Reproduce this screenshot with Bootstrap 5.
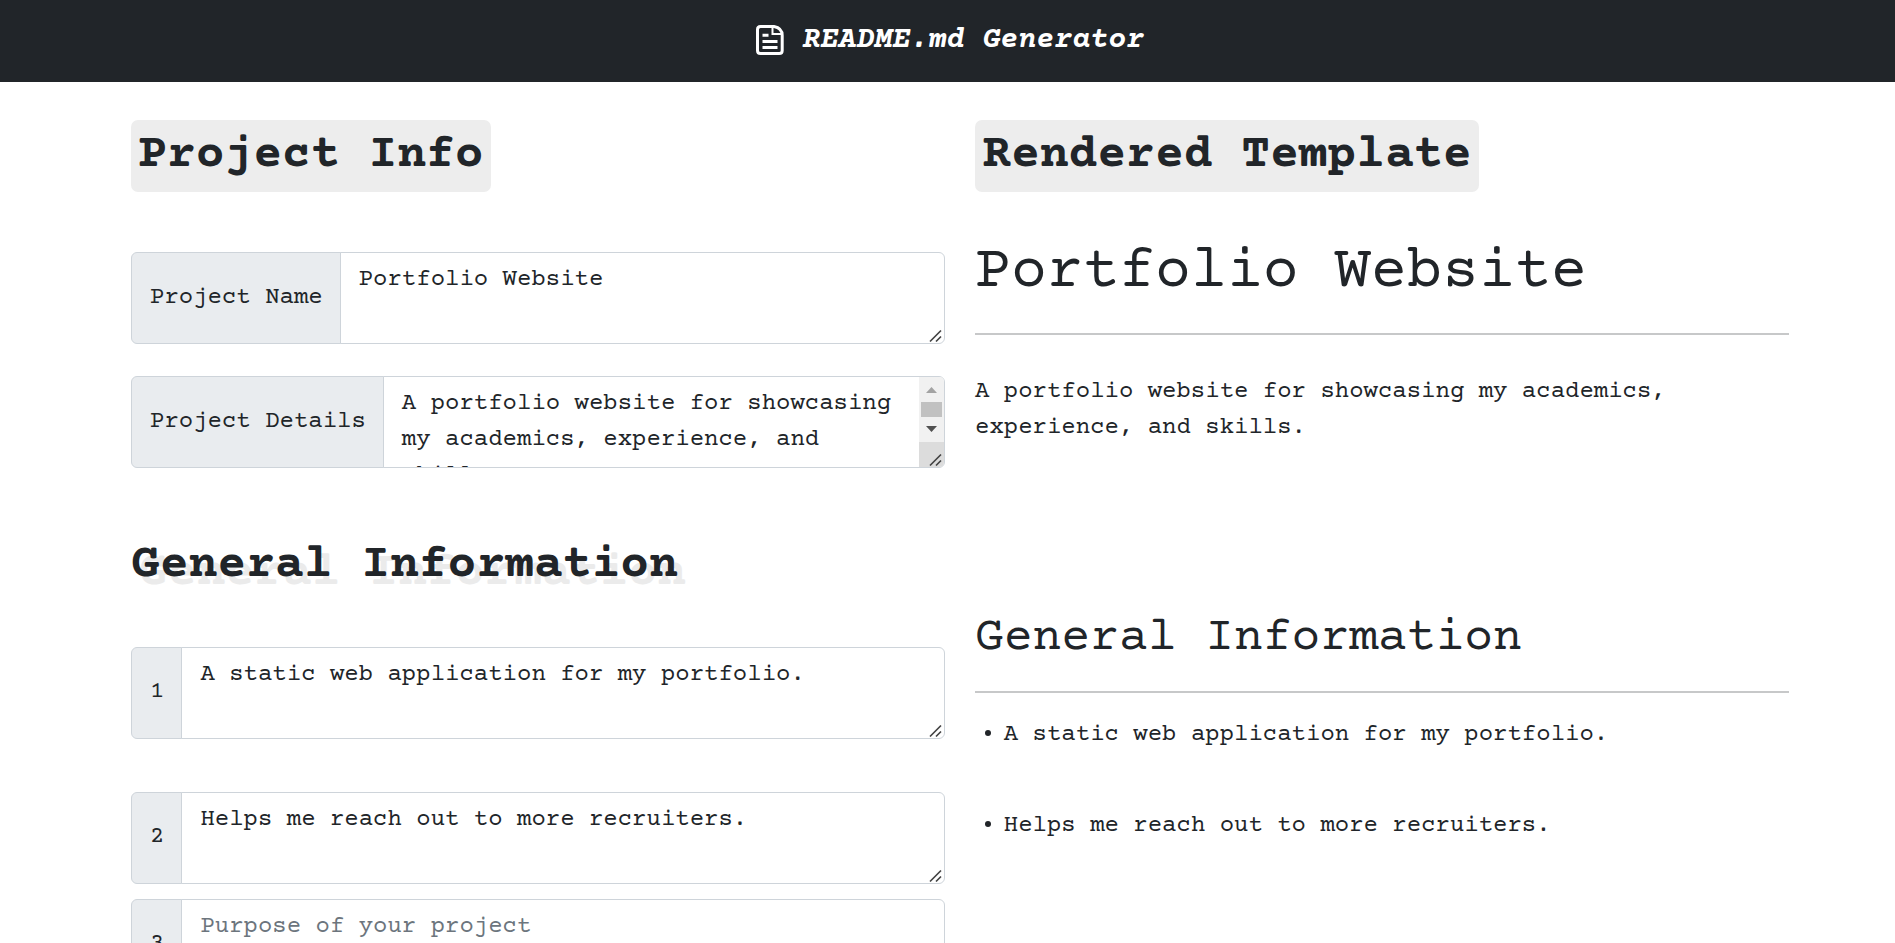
<!DOCTYPE html>
<html lang="en">
<head>
<meta charset="utf-8">
<title>README.md Generator</title>
<link href="https://cdn.jsdelivr.net/npm/bootstrap@5.3.0/dist/css/bootstrap.min.css" rel="stylesheet">
<style>
body{font-family:"Courier Prime","Liberation Mono",monospace;font-size:24px;line-height:36px;height:943px;overflow:hidden;color:#212529;background:#fff}
.topbar{height:82px;background:#212529;color:#fff;padding-left:756px}
.topbar svg{margin:0 18.500px 2px 0}
.brand{font-size:30px;line-height:36px;padding-bottom:1px}
.page{width:1688px;margin-left:116px;padding:38px 0 0}
.page .row{--bs-gutter-x:30px;margin:0}
.tag-title{display:inline-block;height:72px;padding:7px 7.2px 0;border-radius:7px;background:#ededed;font-size:48px;line-height:57.6px;font-weight:700;margin:0;vertical-align:top}
.section-title{font-size:48px;line-height:57.6px;margin:0}
.shadowed{font-weight:700;text-shadow:8px 8px #ebebeb}
.field-group{position:relative;height:92px}
.field-group .input-group-text,.field-group .form-control{font-size:24px;line-height:36px;border-color:#ced4da;color:#212529;border-radius:6px}
.field-group .input-group-text{padding:0 17px 1px 18px;background:#e9ecef}
.field-group .form-control{padding:9px 18px;resize:none;overflow:hidden;height:92px;border-top-right-radius:6px!important;border-bottom-right-radius:6px!important}
.field-group .form-control::placeholder{color:#6c757d}
.field-group .scrolling{padding-right:43px}
.grip{position:absolute;right:2px;bottom:1px;z-index:6}
.grip-track{right:1px}
.page hr{height:2px;border:0;background:#212529;opacity:.25}
.doc-title{font-size:60px;line-height:72px;margin:0}
.points{list-style:none;margin:0;padding:0 0 0 28.8px}
.points li{position:relative;height:91px}
.points li::before{content:"";position:absolute;left:-18.500px;top:13px;width:6px;height:6px;border-radius:50%;background:#212529}
</style>
</head>
<body>
<svg width="0" height="0" class="position-absolute">
  <symbol id="grip" viewBox="0 0 14 14"><path d="M1 12.500 12 1.500M7 12.500l5-5" stroke="#444" stroke-width="1.700" fill="none"/></symbol>
</svg>
<header class="topbar d-flex align-items-center">
  <svg width="28" height="30" viewBox="0 0 28 30" fill="none" stroke="#fff" stroke-width="3">
    <path d="M4.500 1.500H18Q26.200 3 26.200 10.500V25.500Q26.200 28.500 23.200 28.500H4.500Q1.500 28.500 1.500 25.500V4.500Q1.500 1.500 4.500 1.500Z"/>
    <path d="M16.500 2V9H26" stroke-width="2"/>
    <path d="M6.500 10.300h6M6.500 16.500h15M6.500 22.500h15"/>
  </svg>
  <div class="brand fw-bold fst-italic">README.md Generator</div>
</header>
<main class="page">
  <div class="row">
    <section class="col-6">
      <h1 class="tag-title">Project Info</h1>
      <div class="input-group field-group" style="margin-top:60px">
        <span class="input-group-text">Project Name</span>
        <textarea class="form-control" rows="2">Portfolio Website</textarea>
        <svg class="grip" width="14" height="14"><use href="#grip"/></svg>
      </div>
      <div class="input-group field-group" style="margin-top:32px">
        <span class="input-group-text">Project Details</span>
        <textarea class="form-control scrolling" rows="2">A portfolio website for showcasing my academics, experience, and skills.</textarea>
        <svg class="grip grip-track" width="25" height="90" viewBox="0 0 25 90">
          <path d="M0 0h20q5 0 5 5v60H0z" fill="#f1f1f1"/>
          <path d="M0 65h25v20q0 5-5 5H0z" fill="#dcdcdc"/>
          <path d="M7 16h11l-5.500-6z" fill="#a3a3a3"/>
          <path d="M2 25h21v15H2z" fill="#c1c1c1"/>
          <path d="M7 49h11l-5.500 6z" fill="#505050"/>
          <use href="#grip" x="10" y="76" width="14" height="14"/>
        </svg>
      </div>
      <h2 class="section-title shadowed" style="margin-top:69px">General Information</h2>
      <div class="input-group field-group" style="margin-top:52.4px">
        <span class="input-group-text">1</span>
        <textarea class="form-control" rows="2">A static web application for my portfolio.</textarea>
        <svg class="grip" width="14" height="14"><use href="#grip"/></svg>
      </div>
      <div class="input-group field-group" style="margin-top:53px">
        <span class="input-group-text">2</span>
        <textarea class="form-control" rows="2">Helps me reach out to more recruiters.</textarea>
        <svg class="grip" width="14" height="14"><use href="#grip"/></svg>
      </div>
      <div class="input-group field-group" style="margin-top:15px">
        <span class="input-group-text">3</span>
        <textarea class="form-control" rows="2" placeholder="Purpose of your project"></textarea>
        <svg class="grip" width="14" height="14"><use href="#grip"/></svg>
      </div>
    </section>
    <section class="col-6">
      <h1 class="tag-title">Rendered Template</h1>
      <div class="doc-title" style="margin-top:45px">Portfolio Website</div>
      <hr style="margin:24px 0 39px">
      <p class="m-0">A portfolio website for showcasing my academics, experience, and skills.</p>
      <h2 class="section-title fw-normal" style="margin-top:163.500px">General Information</h2>
      <hr style="margin:23.900px 0 24px">
      <ul class="points">
        <li>A static web application for my portfolio.</li>
        <li>Helps me reach out to more recruiters.</li>
      </ul>
    </section>
  </div>
</main>
<script src="https://cdn.jsdelivr.net/npm/bootstrap@5.3.0/dist/js/bootstrap.bundle.min.js"></script>
</body>
</html>
